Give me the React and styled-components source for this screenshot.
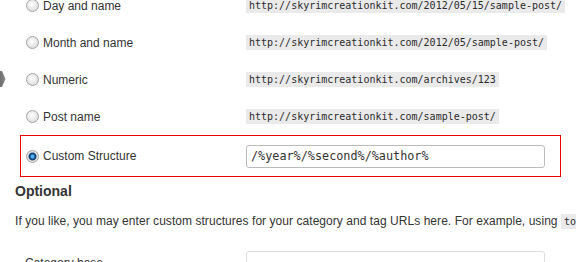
import React from 'react';
import styled, { createGlobalStyle } from 'styled-components';

const Global = createGlobalStyle`
  html, body { margin: 0; padding: 0; background: #fff; overflow: hidden; }
  body {
    font-family: "Liberation Sans", Arial, sans-serif;
    font-size: 12px;
    color: #333;
  }
`;

const Page = styled.div`
  position: relative;
  width: 576px;
  height: 262px;
  overflow: hidden;
`;

const Pointer = styled.svg`
  position: absolute;
  left: 0;
  top: 71px;
`;

const Rows = styled.div`
  margin-top: -13px;
  margin-left: 20px;
  width: 541px;
`;

const Row = styled.div`
  box-sizing: border-box;
  display: flex;
  align-items: center;
  height: ${(p) => (p.$boxed ? 42 : 37)}px;
  padding-left: 5px;
  border: 1px solid ${(p) => (p.$boxed ? '#ee0000' : 'transparent')};
`;

const Label = styled.label`
  display: flex;
  align-items: center;
  gap: 4px;
  width: 220px;
  flex: none;
  line-height: 16px;
`;

const Radio = styled.span`
  box-sizing: border-box;
  width: 13px;
  height: 13px;
  border-radius: 50%;
  border: 1px solid #a4a4a4;
  background: ${(p) =>
    p.$checked
      ? 'radial-gradient(circle at 50% 50%, #5fb2ee 0 1.2px, #1d6bb0 2.2px, #0c3563 3.4px, #8a9aa8 4px, #eaeaea 4.6px, #cfcfcf 100%)'
      : 'radial-gradient(circle at 45% 40%, #ffffff 0, #f0f0f0 35%, #d2d2d2 100%)'};
  flex: none;
`;

const Code = styled.code`
  font-family: "DejaVu Sans Mono", "Liberation Mono", monospace;
  font-size: 10px;
  line-height: 11px;
  padding: 2px 3px;
  background: #eaeaea;
  color: #2a2a2a;
  white-space: nowrap;
  letter-spacing: 0;
`;

const TextInput = styled.input`
  box-sizing: border-box;
  width: 299px;
  height: 23px;
  margin: 0;
  padding: 0 4px;
  border: 1px solid ${(p) => (p.$light ? '#dddddd' : '#bbbbbb')};
  border-radius: 3px;
  background: #fff;
  color: #333;
  font-family: "DejaVu Sans Mono", "Liberation Mono", monospace;
  font-size: 11.8px;
  outline: none;
`;

const Heading = styled.h3`
  margin: 5px 0 0 15px;
  font-size: 14px;
  line-height: 18px;
  font-weight: bold;
  color: #333;
`;

const Para = styled.p`
  margin: 12px 0 0 15px;
  line-height: 18px;
  white-space: nowrap;
  letter-spacing: 0.05px;
`;

const FieldRow = styled.div`
  display: flex;
  align-items: center;
  margin-top: 21px;
  padding-left: 25px;
`;

const FieldLabel = styled.label`
  width: 221px;
  flex: none;
`;

const options = [
  { label: 'Day and name', url: 'http://skyrimcreationkit.com/2012/05/15/sample-post/' },
  { label: 'Month and name', url: 'http://skyrimcreationkit.com/2012/05/sample-post/' },
  { label: 'Numeric', url: 'http://skyrimcreationkit.com/archives/123' },
  { label: 'Post name', url: 'http://skyrimcreationkit.com/sample-post/' },
];

export default function App() {
  return (
    <Page>
      <Global />
      <Pointer width="6" height="16" viewBox="0 0 6 16">
        <defs>
          <linearGradient id="pg" x1="0" y1="0" x2="1" y2="0">
            <stop offset="0" stopColor="#6f6f6f" />
            <stop offset="1" stopColor="#8a8a8a" />
          </linearGradient>
        </defs>
        <polygon points="0,0 2,0 5.5,8 2,16 0,16" fill="url(#pg)" />
      </Pointer>
      <Rows>
        {options.map((o) => (
          <Row key={o.label}>
            <Label>
              <Radio />
              {o.label}
            </Label>
            <Code>{o.url}</Code>
          </Row>
        ))}
        <Row $boxed>
          <Label>
            <Radio $checked />
            Custom Structure
          </Label>
          <TextInput readOnly value="/%year%/%second%/%author%" />
        </Row>
      </Rows>
      <Heading>Optional</Heading>
      <Para>
        If you like, you may enter custom structures for your category and tag URLs here. For example, using{' '}
        <Code>topics</Code> as your category base would make your category links like
      </Para>
      <FieldRow>
        <FieldLabel>Category base</FieldLabel>
        <TextInput $light readOnly value="" />
      </FieldRow>
    </Page>
  );
}
